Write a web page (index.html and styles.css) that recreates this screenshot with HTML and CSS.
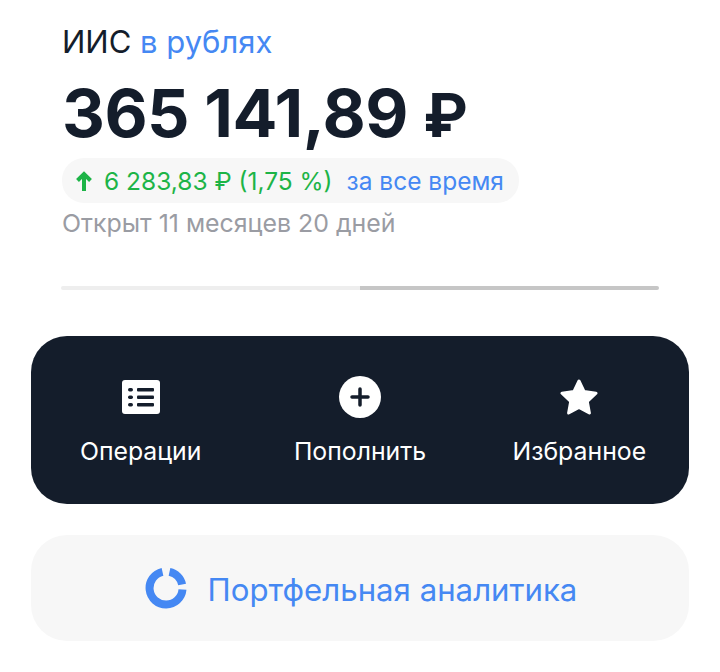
FILE: index.html
```html
<!DOCTYPE html>
<html lang="ru">
<head>
  <meta charset="UTF-8" />
  <meta name="viewport" content="width=device-width, initial-scale=1.0"/>
  <title>ИИС</title>
  <link rel="stylesheet" href="styles.css">
</head>
<body>
  <div class="page">
    <div class="account">
      <div class="account-title">ИИС <span class="link">в рублях</span></div>
      <div class="amount">365 141,89 <span class="amount-currency">₽</span></div>
      <div class="profit">
        <svg class="profit-arrow" viewBox="0 0 16 20" width="16" height="20">
          <path d="M8 20V3M1.500 9.500L8 3L14.500 9.500" fill="none" stroke="#1db447" stroke-width="4"/>
        </svg>
        <span class="profit-value">6 283,83 ₽ (1,75 %)</span>
        <span class="link">за все время</span>
      </div>
      <div class="opened">Открыт 11 месяцев 20 дней</div>
    </div>

    <div class="pager">
      <div class="pager-left"></div>
      <div class="pager-right"></div>
    </div>

    <div class="actions">
      <div class="action">
        <svg viewBox="0 0 38 34" width="38" height="34">
          <rect width="38" height="34" rx="3" fill="#fff"/>
          <g fill="#141d2b">
            <rect x="6" y="8" width="5" height="3.500" rx="1.700"/>
            <rect x="6" y="15.500" width="5" height="3.500" rx="1.700"/>
            <rect x="6" y="23" width="5" height="3.500" rx="1.700"/>
            <rect x="15" y="8" width="17" height="3.500" rx="1"/>
            <rect x="15" y="15.500" width="17" height="3.500" rx="1"/>
            <rect x="15" y="23" width="17" height="3.500" rx="1"/>
          </g>
        </svg>
        <span>Операции</span>
      </div>
      <div class="action">
        <svg viewBox="0 0 42 42" width="42" height="42">
          <circle cx="21" cy="21" r="21" fill="#fff"/>
          <path d="M21 13V29M13 21H29" stroke="#141d2b" stroke-width="3.500" stroke-linecap="round"/>
        </svg>
        <span>Пополнить</span>
      </div>
      <div class="action">
        <svg viewBox="0 0 38 36" width="38" height="36">
          <path d="M19 2L24 12.500L36 14.200L27.300 22.500L29.400 34L19 28.500L8.600 34L10.700 22.500L2 14.200L14 12.500Z" fill="#fff" stroke="#fff" stroke-width="3" stroke-linejoin="round"/>
        </svg>
        <span>Избранное</span>
      </div>
    </div>

    <div class="analytics">
      <svg viewBox="0 0 42 42" width="42" height="42">
        <g fill="none" stroke="#4588f3" stroke-width="8">
          <path d="M17.500 4.900A16.500 16.500 0 1 0 37.500 22.500"/>
          <path d="M24.500 4.900A16.500 16.500 0 0 1 37.100 17.500"/>
        </g>
      </svg>
      <span class="link analytics-label">Портфельная аналитика</span>
    </div>
  </div>
</body>
</html>
```

FILE: styles.css
```css
body {
  font-family: Inter, "Noto Sans", sans-serif;
  background-color: #fff;
  color: #141d2b;
  margin: 0;
}
.page {
  padding: 22px 31px 0;
}
.link {
  color: #4588f3;
}
.account {
  padding-left: 31px;
}
.account-title {
  font-size: 31px;
  line-height: 40px;
}
.amount {
  font-size: 66.500px;
  font-weight: 700;
  line-height: 76px;
  margin-top: 13px;
  letter-spacing: -0.5px;
}
.amount-currency {
  font-size: 60px;
}
.profit {
  display: inline-flex;
  align-items: center;
  height: 45px;
  margin-top: 5px;
  padding: 0 15px 0 14px;
  background-color: #f7f7f7;
  border-radius: 22px;
  font-size: 24.500px;
}
.profit-arrow {
  margin-right: 12px;
}
.profit-value {
  color: #1db447;
  margin-right: 14px;
}
.opened {
  font-size: 24.900px;
  line-height: 32px;
  margin-top: 4px;
  color: #9a9ca3;
}
.pager {
  display: flex;
  height: 4px;
  margin: 47px 30px 46px;
}
.pager-left {
  flex: 1;
  background-color: #eeeeee;
  border-radius: 2px 0 0 2px;
}
.pager-right {
  flex: 1;
  background-color: #c6c6c6;
  border-radius: 0 2px 2px 0;
}
.actions {
  display: flex;
  height: 168px;
  background-color: #141d2b;
  border-radius: 36px;
  color: #fff;
}
.action {
  flex: 1;
  display: flex;
  flex-direction: column;
  align-items: center;
  font-size: 24.800px;
}
.action svg {
  margin-top: 40px;
  height: 42px;
}
.action span {
  margin-top: 18px;
  line-height: 30px;
}
.analytics {
  display: flex;
  align-items: center;
  justify-content: center;
  gap: 21px;
  height: 106px;
  padding-left: 2px;
  margin-top: 31px;
  background-color: #f7f7f7;
  border-radius: 36px;
  font-size: 31.200px;
}
.analytics-label {
  margin-top: 4px;
}
```
